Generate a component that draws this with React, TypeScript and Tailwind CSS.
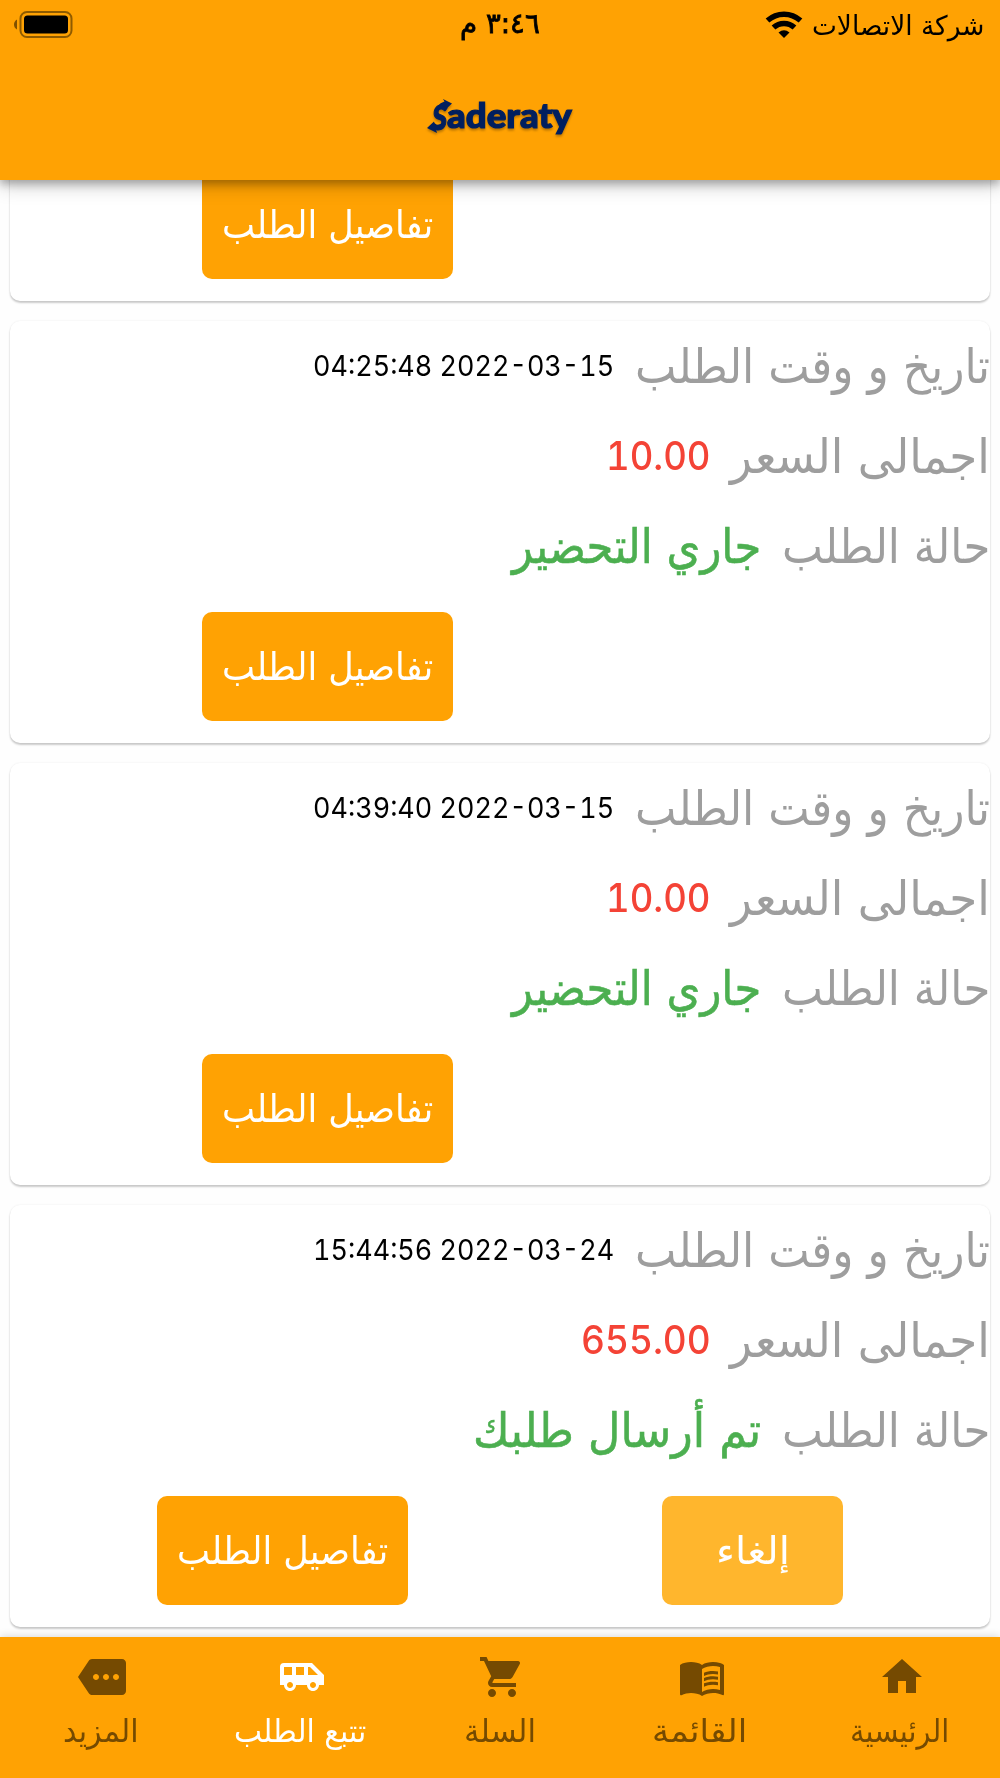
import { useLayoutEffect, useRef, useState } from 'react';
import type { ReactNode } from 'react';
import clsx from 'clsx';
import { MdAirportShuttle, MdHome, MdMenuBook, MdMore, MdShoppingCart } from 'react-icons/md';

type FitTextProps = {
  width: number;
  className?: string;
  children: ReactNode;
};

// Stretches or squeezes a single line so that it fills the given width
const FitText = ({ width, className, children }: FitTextProps) => {
  const ref = useRef<HTMLSpanElement>(null);
  const [scale, setScale] = useState(1);

  useLayoutEffect(() => {
    if (ref.current) setScale(width / ref.current.offsetWidth);
  }, [width]);

  return (
    <span className={clsx('flex shrink-0 leading-none', className)} style={{ width }}>
      <span
        ref={ref}
        className="block shrink-0 whitespace-nowrap origin-right"
        style={{ transform: `scaleX(${scale})` }}
      >
        {children}
      </span>
    </span>
  );
};

type Order = {
  date: string;
  dateWidth: number;
  price: string;
  priceWidth: number;
  status: string;
  statusWidth: number;
  cancellable?: boolean;
};

const orders: Order[] = [
  { date: '2022-03-15 04:25:48', dateWidth: 301, price: '10.00', priceWidth: 105, status: 'جاري التحضير', statusWidth: 249 },
  { date: '2022-03-15 04:39:40', dateWidth: 301, price: '10.00', priceWidth: 105, status: 'جاري التحضير', statusWidth: 249 },
  { date: '2022-03-24 15:44:56', dateWidth: 301, price: '655.00', priceWidth: 130, status: 'تم أرسال طلبك', statusWidth: 288, cancellable: true },
];

const tabs = [
  { label: 'الرئيسية', width: 99, Icon: MdHome },
  { label: 'القائمة', width: 95, Icon: MdMenuBook },
  { label: 'السلة', width: 72, Icon: MdShoppingCart },
  { label: 'تتبع الطلب', width: 132, Icon: MdAirportShuttle, active: true },
  { label: 'المزيد', width: 76, Icon: MdMore },
];

const DetailsButton = () => (
  <button className="flex h-[109px] w-[251px] items-center justify-center rounded-[10px] bg-[#ffa203] text-white">
    <FitText width={211} className="text-[38px]">تفاصيل الطلب</FitText>
  </button>
);

const OrderCard = ({ order }: { order: Order }) => (
  <article className="h-[422px] shrink-0 rounded-[10px] bg-white shadow-[0_2px_2px_rgba(0,0,0,0.2),0_0_2px_rgba(0,0,0,0.08)]">
    <div className="flex h-[90px] items-center">
      <FitText width={355} className="text-[48px] text-[#9e9e9e]">تاريخ و وقت الطلب</FitText>
      <FitText width={order.dateWidth} className="mb-[2px] mr-[21px] font-[Inter] text-[29px] tabular-nums text-black">{order.date}</FitText>
    </div>
    <div className="flex h-[90px] items-center">
      <FitText width={260} className="text-[48px] text-[#9e9e9e]">اجمالى السعر</FitText>
      <FitText width={order.priceWidth} className="mb-[1px] mr-[19px] font-[Inter] text-[39px] font-medium tabular-nums text-[#f44336]">{order.price}</FitText>
    </div>
    <div className="flex h-[90px] items-center">
      <FitText width={208} className="text-[48px] text-[#9e9e9e]">حالة الطلب</FitText>
      <FitText width={order.statusWidth} className="mr-[21px] text-[48px] text-[#4caf50] [-webkit-text-stroke:0.6px_#4caf50]">{order.status}</FitText>
    </div>
    <div className="mt-[21px] flex">
      {order.cancellable ? (
        <>
          <button className="mr-[147px] flex h-[109px] w-[181px] items-center justify-center rounded-[10px] bg-[#ffb62d] text-white">
            <FitText width={74} className="text-[38px]">إلغاء</FitText>
          </button>
          <div className="mr-[254px]">
            <DetailsButton />
          </div>
        </>
      ) : (
        <div className="mr-[537px]">
          <DetailsButton />
        </div>
      )}
    </div>
  </article>
);

const StatusBar = () => (
  <div className="grid h-[50px] grid-cols-3 items-center px-[16px] text-black">
    <div className="flex items-center gap-[9px]">
      <FitText width={172} className="text-[27px]">شركة الاتصالات</FitText>
      <svg className="mb-[1px] h-[28px] w-[38px]" viewBox="0 0 38 28">
        <path d="M2.5 9.5C12 1 26 1 35.500 9.500" fill="none" stroke="currentColor" strokeWidth="5.500" />
        <path d="M8.500 16.500C14.500 11 23.500 11 29.500 16.500" fill="none" stroke="currentColor" strokeWidth="5.500" />
        <path d="M13.500 21.500Q19 17 24.500 21.500L19 27Z" fill="currentColor" />
      </svg>
    </div>
    <div className="flex justify-center">
      <FitText width={80} className="pb-[3px] text-[28px] [-webkit-text-stroke:0.8px_#000]">٣:٤٦ م</FitText>
    </div>
    <div className="flex justify-end">
      <svg className="ml-[-2px] h-[30px] w-[62px]" viewBox="0 0 62 30">
        <path d="M3 9.500v10c-4-2-4-8 0-10z" fill="#7f5100" />
        <rect x="6.500" y="2" width="51" height="25" rx="6.500" fill="none" stroke="#8f5b00" strokeWidth="2" />
        <rect x="10" y="5.500" width="44" height="18" rx="3.500" fill="#000" />
      </svg>
    </div>
  </div>
);

const Logo = () => (
  <div dir="ltr" className="relative flex h-[50px] w-[146px] items-center pl-[5px] font-[Lato] font-black text-[#001f5f] [-webkit-text-stroke:1.2px_#001f5f] [filter:drop-shadow(0_2px_1px_rgba(80,50,0,0.4))]">
    <FitText width={15} className="mt-[3px] justify-end text-[35px] italic">S</FitText>
    <FitText width={125} className="justify-end text-[34px]">aderaty</FitText>
    <svg className="absolute left-0 top-0 h-[50px] w-[30px]" viewBox="0 0 30 50" fill="currentColor">
      <path d="M16 9l9 4.500-6.500 6-1-3.500q-5 0-7 4-2-5 7-8.500z" />
      <path d="M0 38l7-6.500 1 3q5 1 8-3 1 6-7 8l1 3.500z" />
    </svg>
  </div>
);

const App = () => {
  return (
    <div
      dir="rtl"
      className="flex h-[1778px] w-[1000px] flex-col overflow-hidden bg-[#fefefe] font-['DejaVu_Sans',sans-serif]"
    >
      <header className="relative z-10 h-[180px] shrink-0 bg-[#ffa203] shadow-[0_4px_8px_rgba(0,0,0,0.25),0_6px_18px_rgba(0,0,0,0.2)]">
        <StatusBar />
        <div className="flex justify-center pt-[40px]">
          <Logo />
        </div>
      </header>

      <main className="flex h-[1457px] shrink-0 flex-col justify-end gap-[20px] overflow-hidden px-[10px] pb-[10px]">
        <article className="h-[422px] shrink-0 rounded-[10px] bg-white pt-[291px] shadow-[0_2px_2px_rgba(0,0,0,0.2),0_0_2px_rgba(0,0,0,0.08)]">
          <div className="mr-[537px]">
            <DetailsButton />
          </div>
        </article>
        {orders.map((order) => (
          <OrderCard key={order.date} order={order} />
        ))}
      </main>

      <nav className="relative z-10 grid h-[141px] shrink-0 grid-cols-5 bg-[#ffa203] shadow-[0_-1px_8px_rgba(0,0,0,0.15)]">
        {tabs.map(({ label, width, Icon, active }) => (
          <a
            key={label}
            className={clsx('flex flex-col items-center pt-[16px]', active ? 'text-white' : 'text-[#754a01]')}
          >
            <Icon className="ml-[3px] size-[48px]" />
            <FitText width={width} className="mt-[14px] text-[32px]">{label}</FitText>
          </a>
        ))}
      </nav>
    </div>
  );
};

export default App;
